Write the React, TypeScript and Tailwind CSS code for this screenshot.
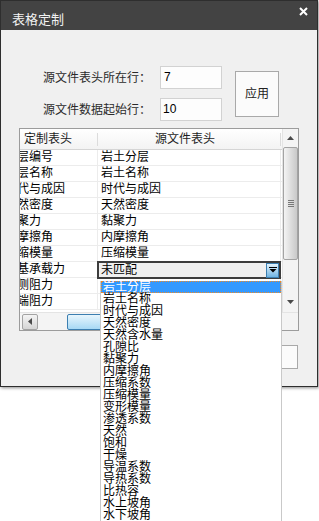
import React from 'react'

const font = "font-['Liberation_Sans','Noto_Sans_CJK_SC',sans-serif]"

const rows = [
    { name: '地层编号', source: '岩土分层' },
    { name: '地层名称', source: '岩土名称' },
    { name: '时代与成因', source: '时代与成因' },
    { name: '天然密度', source: '天然密度' },
    { name: '黏聚力', source: '黏聚力' },
    { name: '内摩擦角', source: '内摩擦角' },
    { name: '压缩模量', source: '压缩模量' },
    { name: '地基承载力', source: '' },
    { name: '桩侧阻力', source: '' },
    { name: '桩端阻力', source: '' },
]

const options = [
    '岩土分层', '岩土名称', '时代与成因', '天然密度', '天然含水量', '孔隙比', '黏聚力',
    '内摩擦角', '压缩系数', '压缩模量', '变形模量', '渗透系数', '天然', '饱和', '干燥',
    '导温系数', '导热系数', '比热容', '水上坡角', '水下坡角',
]

function DropList() {
    return (
        <div className="absolute left-[1px] top-[18px] z-50 w-[182px] border-x border-b border-[#c9c9c9] bg-white pb-[1px]">
            {options.map((opt, i) => (
                <div
                    key={opt}
                    className={
                        i === 0
                            ? 'h-[12px] border border-dotted border-[#f08a24] bg-[#3399ff] pl-[1px] text-[12px] leading-[10px] text-white'
                            : 'h-[12px] pl-[2px] text-[12px] leading-[12px] text-black'
                    }
                >
                    {opt}
                </div>
            ))}
        </div>
    )
}

function Combo() {
    return (
        <div className="absolute -left-[1px] -top-[1px] z-40 flex h-[18px] w-[184px] items-center border-2 border-[#3d3d3d] bg-[#f0f0f0] pl-[2px]">
            <span className="flex-1 text-[12px] leading-[14px] text-black">未匹配</span>
            <div className="flex h-[15px] w-[13px] items-center justify-center border border-[#3c7fb1] bg-gradient-to-b from-[#e3f3fc] to-[#6fb4e2]">
                <svg width="8" height="6" viewBox="0 0 8 6">
                    <rect x="0" y="0" width="8" height="1" fill="#000" />
                    <path d="M0.5 2 H7.5 L4 5.5 Z" fill="#000" />
                </svg>
            </div>
            <DropList />
        </div>
    )
}

function Grid() {
    return (
        <div className="ml-[18px] mt-[7px] flex h-[203px] w-[280px] flex-col border border-[#9c9c9c] bg-white">
            <div className="flex h-[183px]">
                <div className="flex w-[262px] flex-col">
                    <div className="flex h-[21px] border-b border-[#d5d5d5] bg-gradient-to-b from-white to-[#f3f3f3] text-[12px] leading-[20px] text-[#1e1e1e]">
                        <div className="flex w-[78px] items-center justify-between pl-[4px]">
                            <span>定制表头</span>
                            <span className="h-[13px] w-px bg-[#dcdcdc]" />
                        </div>
                        <div className="flex w-[183px] items-center justify-between">
                            <span className="flex-1 pr-[8px] text-center">源文件表头</span>
                            <span className="h-[13px] w-px bg-[#dcdcdc]" />
                        </div>
                    </div>
                    {rows.map((r, i) => (
                        <div key={r.name} className="flex h-[16px] border-b border-[#ececec] text-[12px] leading-[15px] text-black">
                            <div className="w-[78px] overflow-hidden border-r border-[#ececec]">
                                <div className="-ml-[15px] whitespace-nowrap">{r.name}</div>
                            </div>
                            <div className="relative w-[183px] border-r border-[#ececec] pl-[3px]">
                                {r.source}
                                {i === 7 && <Combo />}
                            </div>
                        </div>
                    ))}
                </div>
                <div className="flex w-[16px] flex-col items-center border-l border-[#e4e4e4] bg-[#f4f4f4]">
                    <div className="flex h-[18px] items-center">
                        <svg width="7" height="4" viewBox="0 0 7 4">
                            <path d="M3.5 0 L7 4 H0 Z" fill="#4a4a4a" />
                        </svg>
                    </div>
                    <div className="flex h-[113px] w-[15px] items-center justify-center rounded-[2px] border border-[#a3a3a3] bg-gradient-to-r from-[#f4f4f4] to-[#c9c9c9]">
                        <div className="flex flex-col gap-[1px]">
                            <span className="h-px w-[6px] bg-[#777]" />
                            <span className="h-px w-[6px] bg-[#777]" />
                            <span className="h-px w-[6px] bg-[#777]" />
                            <span className="h-px w-[6px] bg-[#777]" />
                        </div>
                    </div>
                    <div className="flex flex-1 items-end pb-[8px]">
                        <svg width="7" height="4" viewBox="0 0 7 4">
                            <path d="M0 0 H7 L3.5 4 Z" fill="#4a4a4a" />
                        </svg>
                    </div>
                </div>
            </div>
            <div className="flex h-[18px] items-center border-t border-[#e4e4e4] bg-[#f4f4f4] pl-[2px]">
                <div className="flex h-[16px] w-[16px] items-center justify-center rounded-[2px] border border-[#a3a3a3] bg-gradient-to-b from-[#f4f4f4] to-[#d5d5d5]">
                    <svg width="4" height="7" viewBox="0 0 4 7">
                        <path d="M0 3.5 L4 0 V7 Z" fill="#4a4a4a" />
                    </svg>
                </div>
                <div className="ml-[29px] h-[16px] w-[100px] rounded-[2px] border border-[#3c7fb1] bg-gradient-to-b from-[#e8f6fd] to-[#a7d9f5]" />
            </div>
        </div>
    )
}

export default function App() {
    return (
        <div className={`h-[521px] w-[319px] bg-white ${font}`}>
            <div className="h-[387px] w-[318px] border border-[#2e2e2e] bg-[#f0f0f0] shadow-[1px_1px_3px_rgba(0,0,0,0.45)]">
                <div className="flex h-[29px] items-start justify-between bg-[#434343]">
                    <span className="ml-[11px] mt-[11px] text-[13px] leading-[15px] text-[#f2f2f2]">表格定制</span>
                    <svg className="mr-[9px] mt-[6px]" width="9" height="9" viewBox="0 0 9 9">
                        <path d="M1 1 L8 8 M8 1 L1 8" stroke="#ffffff" strokeWidth="2" />
                    </svg>
                </div>

                <div className="ml-[42px] mt-[36px] flex items-center">
                    <div className="flex flex-col gap-[9px]">
                        <div className="flex items-center">
                            <span className="w-[117px] text-[12px] text-[#2b2b2b]">源文件表头所在行：</span>
                            <div className="h-[23px] w-[62px] border border-[#d2d2d2] bg-[#fdfdfd] pl-[3px] text-[12px] leading-[21px] text-black">7</div>
                        </div>
                        <div className="flex items-center">
                            <span className="w-[117px] text-[12px] text-[#2b2b2b]">源文件数据起始行：</span>
                            <div className="h-[23px] w-[62px] border border-[#d2d2d2] bg-[#fdfdfd] pl-[2px] text-[12px] leading-[21px] text-black">10</div>
                        </div>
                    </div>
                    <button className="ml-[13px] h-[46px] w-[44px] border border-[#a9a9a9] bg-[#fbfbfb] text-[12px] text-[#222]">
                        应用
                    </button>
                </div>

                <Grid />

                <div className="mt-[14px] flex justify-end pr-[19px]">
                    <button className="h-[24px] w-[62px] border border-[#a9a9a9] bg-[#fbfbfb] text-[12px] text-[#222]">确定</button>
                </div>
            </div>
        </div>
    )
}
